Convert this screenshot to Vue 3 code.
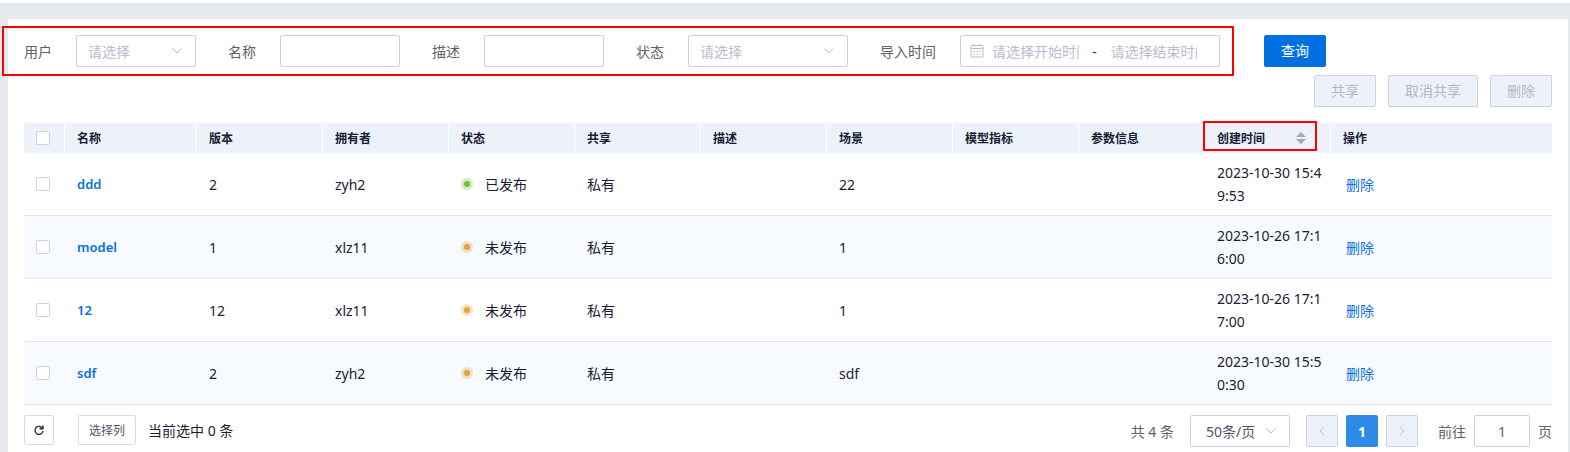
<script setup>
import { ref, computed } from 'vue'

const user = ref('')
const name = ref('')
const desc = ref('')
const state = ref('')
const start = ref('')
const end = ref('')
const pageSize = ref('50')
const jump = ref('1')

const columns = [
  { key: 'version', title: '版本' },
  { key: 'owner', title: '拥有者' },
  { key: 'status', title: '状态' },
  { key: 'share', title: '共享' },
  { key: 'desc', title: '描述' },
  { key: 'scene', title: '场景' },
  { key: 'metric', title: '模型指标' },
  { key: 'params', title: '参数信息' }
]

const rows = ref([
  { name: 'ddd', version: '2', owner: 'zyh2', published: true, scene: '22', created: '2023-10-30 15:49:53', checked: false },
  { name: 'model', version: '1', owner: 'xlz11', published: false, scene: '1', created: '2023-10-26 17:16:00', checked: false },
  { name: '12', version: '12', owner: 'xlz11', published: false, scene: '1', created: '2023-10-26 17:17:00', checked: false },
  { name: 'sdf', version: '2', owner: 'zyh2', published: false, scene: 'sdf', created: '2023-10-30 15:50:30', checked: false }
].map(r => ({ ...r, share: '私有', status: r.published ? '已发布' : '未发布' })))

const selected = computed(() => rows.value.filter(r => r.checked).length)
const all = computed({
  get: () => selected.value === rows.value.length,
  set: v => rows.value.forEach(r => { r.checked = v })
})
</script>

<template>
  <div class="page">
    <main class="card">
      <form class="toolbar" @submit.prevent>
        <div class="filters">
          <div class="field">
            <label for="f-user">用户</label>
            <span class="select">
              <select id="f-user" v-model="user"><option value="">请选择</option></select>
              <svg class="arrow" viewBox="0 0 14 14"><path d="M2.5 4.5 7 9l4.5-4.5" /></svg>
            </span>
          </div>
          <div class="field">
            <label for="f-name">名称</label>
            <input id="f-name" v-model="name" class="text" type="text">
          </div>
          <div class="field">
            <label for="f-desc">描述</label>
            <input id="f-desc" v-model="desc" class="text" type="text">
          </div>
          <div class="field">
            <label for="f-state">状态</label>
            <span class="select wide">
              <select id="f-state" v-model="state"><option value="">请选择</option></select>
              <svg class="arrow" viewBox="0 0 14 14"><path d="M2.5 4.5 7 9l4.5-4.5" /></svg>
            </span>
          </div>
          <div class="field">
            <label for="f-start">导入时间</label>
            <span class="range">
              <svg class="calendar" viewBox="0 0 14 14">
                <rect x="1" y="1.5" width="12" height="11.5" rx="1" />
                <path d="M1 4.5h12M4 0v2M10 0v2" />
                <path d="M3.5 7.5h1.5M6.3 7.5h1.5M9 7.5h1.5M3.5 10h1.5M6.3 10h1.5M9 10h1.5" />
              </svg>
              <input id="f-start" v-model="start" type="text" placeholder="请选择开始时间">
              <span class="dash">-</span>
              <input v-model="end" type="text" placeholder="请选择结束时间" aria-label="结束时间">
            </span>
          </div>
          <div class="mark filter-mark"></div>
        </div>
        <button class="btn primary" type="submit">查询</button>
      </form>

      <div class="actions">
        <button class="btn" type="button" disabled>共享</button>
        <button class="btn" type="button" disabled>取消共享</button>
        <button class="btn" type="button" disabled>删除</button>
      </div>

      <table>
        <colgroup>
          <col class="c-check">
          <col class="c-name">
          <col v-for="c in columns" :key="c.key" class="c-data">
          <col class="c-data">
          <col>
        </colgroup>
        <thead>
          <tr>
            <th class="check"><input v-model="all" type="checkbox" aria-label="全选"></th>
            <th>名称</th>
            <th v-for="c in columns" :key="c.key">{{ c.title }}</th>
            <th class="sortable">
              <div class="sort">
                <span>创建时间</span>
                <svg viewBox="0 0 10 12"><path d="M0 5 5 0l5 5zM0 7l5 5 5-5z" /></svg>
              </div>
              <div class="mark sort-mark"></div>
            </th>
            <th>操作</th>
          </tr>
        </thead>
        <tbody>
          <tr v-for="row in rows" :key="row.name">
            <td class="check"><input v-model="row.checked" type="checkbox" :aria-label="row.name"></td>
            <td><a class="name" href="#">{{ row.name }}</a></td>
            <td v-for="c in columns" :key="c.key">
              <span v-if="c.key === 'status'" class="status" :class="{ on: row.published }">
                <svg viewBox="0 0 12 12"><circle cx="6" cy="6" r="6" opacity=".3" /><circle cx="6" cy="6" r="3" /></svg>
                {{ row.status }}
              </span>
              <template v-else>{{ row[c.key] }}</template>
            </td>
            <td class="time">{{ row.created }}</td>
            <td class="ops"><a href="#">删除</a></td>
          </tr>
        </tbody>
      </table>

      <footer>
        <div class="left">
          <button class="small icon" type="button" aria-label="刷新">
            <svg viewBox="0 0 10 10"><path d="M8.6 3.6A4 4 0 1 0 9 6M9 .5v3.3H5.6" /></svg>
          </button>
          <button class="small columns" type="button">选择列</button>
          <span>当前选中 {{ selected }} 条</span>
        </div>
        <nav class="pager" aria-label="分页">
          <span class="total">共 4 条</span>
          <span class="select size">
            <select v-model="pageSize" aria-label="每页条数"><option value="50">50条/页</option></select>
            <svg class="arrow" viewBox="0 0 14 14"><path d="M2.5 4.5 7 9l4.5-4.5" /></svg>
          </span>
          <div class="pages">
            <button class="pg" type="button" disabled aria-label="上一页">
              <svg viewBox="0 0 12 12"><path d="M8 2 4 6l4 4" /></svg>
            </button>
            <button class="pg current" type="button">1</button>
            <button class="pg" type="button" disabled aria-label="下一页">
              <svg viewBox="0 0 12 12"><path d="m4 2 4 4-4 4" /></svg>
            </button>
          </div>
          <div class="jump">
            <label for="jump">前往</label>
            <input id="jump" v-model="jump" type="text">
            <span>页</span>
          </div>
        </nav>
      </footer>
    </main>
  </div>
</template>

<style>
body { background: #fff; }
</style>

<style scoped>
* { box-sizing: border-box; }
.page {
  min-height: 100vh;
  display: flex;
  flex-direction: column;
  padding: 16px 2px 0 8px;
  border-top: 3px solid #fff;
  background: #e7ebf0;
  color: #191c35;
  font: 14px/23px "Noto Sans", "Noto Sans CJK SC", sans-serif;
}
.card { flex: 1; background: #fff; padding: 16px 16px 5px; }
input, select, button { font: inherit; color: inherit; margin: 0; }
input, select { outline: none; }
a { color: #0a70e0; text-decoration: none; }
svg { display: block; }

.toolbar { display: flex; gap: 44px; }
.filters { position: relative; display: flex; gap: 32px; color: #606266; }
.field { display: flex; align-items: center; gap: 24px; white-space: nowrap; }
.mark { position: absolute; border: 2px solid #f00; pointer-events: none; }
.filter-mark { inset: -9px -14px -9px -22px; }

.text, .select select, .range, .jump input {
  height: 32px;
  border: 1px solid #d0d1e0;
  border-radius: 2px;
  background: #fff;
}
.text { width: 120px; padding: 0 11px; }
.select { display: grid; align-items: center; width: 120px; color: #b9bbcf; }
.select.wide { width: 160px; }
.select select, .arrow { grid-area: 1 / 1; }
.select select { width: 100%; appearance: none; padding: 0 28px 0 11px; }
.arrow {
  width: 14px;
  height: 14px;
  margin-right: 12px;
  justify-self: end;
  fill: none;
  stroke: #b9bbc6;
  pointer-events: none;
}
.range { display: flex; align-items: center; width: 260px; padding: 0 22px 0 9px; }
.calendar { width: 14px; height: 14px; margin-right: 8px; flex: none; fill: none; stroke: #b9bbcf; }
.range input { flex: 1; min-width: 0; width: 0; padding: 0; border: 0; background: none; }
.range input::placeholder { color: #b9bbcf; opacity: 1; }
.dash { width: 32px; text-align: center; color: #303133; }

.btn {
  height: 32px;
  padding: 0 16px;
  border: 1px solid #d0d1e0;
  border-radius: 2px;
  background: #ecf1fa;
  color: #b4b7c9;
  line-height: 20px;
}
.btn.primary { background: #0070e0; border-color: #0070e0; color: #fff; }
.actions { display: flex; justify-content: flex-end; gap: 12px; margin: 8px 0 16px; }

table { width: 100%; table-layout: fixed; border-collapse: separate; border-spacing: 0; }
.c-check { width: 41px; }
.c-name { width: 132px; }
.c-data { width: 126px; }
th {
  height: 30px;
  padding: 0 12px;
  background: #ecf1fa;
  border-right: 1px solid #fff;
  font-size: 12px;
  font-weight: 700;
  text-align: left;
}
th:last-child { border-right: 0; }
td { height: 63px; padding: 8px 12px; border-bottom: 1px solid #e0e4f0; word-break: break-all; }
tbody tr:nth-child(even) { background: #f7faff; }
.check { padding: 0 12px; }
.check input {
  display: block;
  width: 14px;
  height: 14px;
  appearance: none;
  border: 1px solid #d0d1e0;
  border-radius: 2px;
  background: #fff;
}
.check input:checked { background: #0070e0; }
.name { font-size: 13px; font-weight: 600; }
td.time { padding-right: 8px; }
td.ops { padding-left: 15px; }
.sortable { position: relative; }
.sort { display: flex; justify-content: space-between; align-items: center; padding-right: 12px; }
.sort svg { width: 10px; height: 12px; fill: #a5a8b5; }
.sort-mark { inset: -2px 13px 2px -2px; }
.status { display: flex; align-items: center; gap: 12px; fill: #e6a23c; }
.status.on { fill: #67c23a; }
.status svg { width: 12px; height: 12px; }

footer { display: flex; justify-content: space-between; margin-top: 10px; }
.left { display: flex; align-items: center; height: 30px; }
.small {
  height: 30px;
  padding: 0 10px;
  border: 1px solid #d9d9d9;
  border-radius: 2px;
  background: #fff;
  color: #50536a;
  font-size: 12px;
}
.icon { width: 30px; padding: 0 9px; margin-right: 24px; }
.icon svg { width: 10px; height: 10px; fill: none; stroke: #303133; stroke-width: 1.4; }
.columns { margin-right: 12px; }
.pager { display: flex; align-items: center; gap: 16px; color: #606266; }
.select.size { width: 100px; color: #50536a; }
.size select { padding: 0 28px 0 15px; }
.pages { display: flex; gap: 8px; margin-right: 4px; }
.pg {
  display: grid;
  place-items: center;
  width: 32px;
  height: 32px;
  padding: 0;
  border: 1px solid #d0d1e0;
  border-radius: 2px;
  background: #ecf1fa;
}
.pg svg { width: 12px; height: 12px; fill: none; stroke: #b9bbcf; }
.pg.current { background: #2d8ae8; border-color: #2d8ae8; color: #fff; font-weight: 700; }
.jump { display: flex; align-items: center; gap: 8px; }
.jump input { width: 56px; padding: 0; text-align: center; }
</style>
